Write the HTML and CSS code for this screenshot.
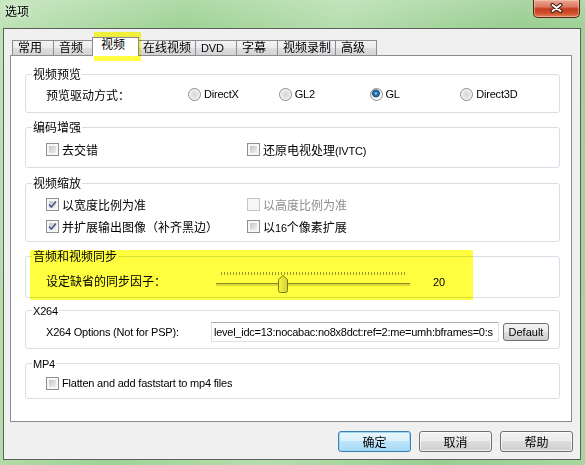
FILE: index.html
```html
<!DOCTYPE html>
<html lang="zh-CN">
<head>
  <meta charset="UTF-8">
  <meta name="viewport" content="width=device-width, initial-scale=1.0">
  <title>选项</title>
  <link rel="stylesheet" href="styles.css">
</head>
<body>
  <div class="window">
    <div class="titlebar">
      <span class="caption">选项</span>
      <button type="button" class="close" aria-label="关闭">
        <svg width="13" height="10" viewBox="0 0 13 10">
          <path d="M2.5 2 L10.5 8 M10.5 2 L2.5 8" stroke="#3b1710" stroke-width="4" stroke-linecap="round" fill="none"/>
          <path d="M2.5 2 L10.5 8 M10.5 2 L2.5 8" stroke="#fff" stroke-width="2" stroke-linecap="round" fill="none"/>
        </svg>
      </button>
    </div>

    <div class="client">
      <div class="tabs">
        <div class="tab">常用</div>
        <div class="tab">音频</div>
        <div class="tab active">视频</div>
        <div class="tab">在线视频</div>
        <div class="tab"><span class="en">DVD</span></div>
        <div class="tab">字幕</div>
        <div class="tab">视频录制</div>
        <div class="tab">高级</div>
      </div>

      <div class="panel">
        <!-- 视频预览 -->
        <div class="group g-preview">
          <div class="group-title">视频预览</div>
          <div class="row">
            <span class="row-label label-driver">预览驱动方式：</span>
            <label class="option"><span class="radio"></span><span class="en">DirectX</span></label>
            <label class="option"><span class="radio"></span><span class="en">GL2</span></label>
            <label class="option"><span class="radio checked"></span><span class="en">GL</span></label>
            <label class="option"><span class="radio"></span><span class="en">Direct3D</span></label>
          </div>
        </div>

        <!-- 编码增强 -->
        <div class="group g-enhance">
          <div class="group-title">编码增强</div>
          <div class="row">
            <label class="option col1"><span class="check"></span><span>去交错</span></label>
            <label class="option"><span class="check"></span><span>还原电视处理<span class="en">(IVTC)</span></span></label>
          </div>
        </div>

        <!-- 视频缩放 -->
        <div class="group g-scale">
          <div class="group-title">视频缩放</div>
          <div class="row">
            <label class="option col1">
              <span class="check"><svg width="11" height="11" viewBox="0 0 11 11"><path d="M2 5.5 L4.3 8 L9 2.5" stroke="#4a5c8c" stroke-width="1.7" fill="none"/></svg></span>
              <span>以宽度比例为准</span>
            </label>
            <label class="option disabled"><span class="check"></span><span>以高度比例为准</span></label>
          </div>
          <div class="row">
            <label class="option col1">
              <span class="check"><svg width="11" height="11" viewBox="0 0 11 11"><path d="M2 5.5 L4.3 8 L9 2.5" stroke="#4a5c8c" stroke-width="1.7" fill="none"/></svg></span>
              <span>并扩展输出图像（补齐黑边）</span>
            </label>
            <label class="option"><span class="check"></span><span>以<span class="en">16</span>个像素扩展</span></label>
          </div>
        </div>

        <!-- 音频和视频同步 -->
        <div class="group g-sync">
          <div class="group-title">音频和视频同步</div>
          <div class="row">
            <span class="row-label label-sync">设定缺省的同步因子：</span>
            <div class="slider">
              <div class="ticks"></div>
              <div class="track"></div>
              <svg class="thumb" width="10" height="18" viewBox="0 0 10 18">
                <defs>
                  <linearGradient id="thumbFill" x1="0" y1="0" x2="1" y2="0">
                    <stop offset="0" stop-color="#f6f6f6"/>
                    <stop offset="1" stop-color="#d0d0d0"/>
                  </linearGradient>
                </defs>
                <path d="M0.5 4.5 L5 0.5 L9.5 4.5 V15.5 Q9.5 17.5 7.5 17.5 H2.5 Q0.5 17.5 0.5 15.5 Z" fill="url(#thumbFill)" stroke="#7a7a7a"/>
              </svg>
            </div>
            <span class="value en">20</span>
          </div>
        </div>

        <!-- X264 -->
        <div class="group g-x264">
          <div class="group-title en">X264</div>
          <div class="row">
            <span class="row-label label-x264 en">X264 Options (Not for PSP):</span>
            <input class="textbox" type="text" value="level_idc=13:nocabac:no8x8dct:ref=2:me=umh:bframes=0:s" readonly>
            <button type="button" class="small-btn">Default</button>
          </div>
        </div>

        <!-- MP4 -->
        <div class="group g-mp4">
          <div class="group-title en">MP4</div>
          <div class="row">
            <label class="option"><span class="check"></span><span class="en">Flatten and add faststart to mp4 files</span></label>
          </div>
        </div>
      </div>

      <div class="actions">
        <button type="button" class="btn default">确定</button>
        <button type="button" class="btn">取消</button>
        <button type="button" class="btn">帮助</button>
      </div>
    </div>
  </div>

  <!-- 黄色标注 -->
  <div class="highlight hl-tab"></div>
  <div class="highlight hl-sync"></div>
</body>
</html>
```

FILE: styles.css
```css
* {
  box-sizing: border-box;
}

body {
  margin: 0;
  width: 585px;
  height: 465px;
  overflow: hidden;
  font-family: "Liberation Sans", "Noto Sans CJK SC", sans-serif;
  font-size: 12px;
  color: #000;
  background:
    linear-gradient(180deg, rgba(255, 255, 255, 0.18), rgba(255, 255, 255, 0) 30px),
    linear-gradient(100deg, #bfe2b7 0%, #9ed294 28%, #b5ddad 52%, #98cd90 78%, #a8d6a0 100%);
}

.en {
  font-size: 11px;
  letter-spacing: -0.2px;
}

/* title bar */

.titlebar {
  height: 28px;
  display: flex;
  align-items: flex-start;
  padding: 0 5px;
}

.caption {
  margin-top: 4px;
  line-height: 16px;
  text-shadow: 0 0 6px rgba(255, 255, 255, 0.9);
}

.close {
  margin-left: auto;
  width: 47px;
  height: 18px;
  padding: 0;
  border: 1px solid #5a2418;
  border-top: none;
  border-radius: 0 0 5px 5px;
  background: linear-gradient(180deg, #e9a894 0%, #dc7a62 40%, #c43d1f 52%, #cf532f 80%, #e6855a 100%);
  box-shadow: inset 0 0 0 1px rgba(255, 220, 200, 0.45);
  display: flex;
  align-items: center;
  justify-content: center;
}

.close svg {
  display: block;
  margin-top: -1px;
}

/* client area */

.client {
  margin-left: 3px;
  width: 578px;
  height: 432px;
  border: 1px solid #5b605b;
  background-color: #f0f0f0;
  padding: 8px 8px 7px 6px;
  display: flex;
  flex-direction: column;
}

.tabs {
  height: 18px;
  display: flex;
  align-items: flex-end;
  padding-left: 2px;
}

.tab {
  height: 15px;
  min-width: 42px;
  margin-right: -1px;
  padding: 0 4px 0 5px;
  border: 1px solid #898c95;
  border-bottom: none;
  line-height: 14px;
  white-space: nowrap;
  background: linear-gradient(180deg, #f3f3f3 0%, #ebebeb 50%, #dedede 51%, #d4d4d4 100%);
}

.tab.active {
  position: relative;
  z-index: 1;
  height: 19px;
  min-width: 47px;
  margin: 0 -2px -1px -2px;
  padding-left: 8px;
  background: #fff;
}

.panel {
  height: 367px;
  background-color: #fff;
  border: 1px solid #898c95;
  padding-top: 18px;
}

/* group boxes */

.group {
  margin: 14px 11px 0 14px;
  padding: 0 8px 8px 20px;
  border: 1px solid #d5dfe5;
  border-radius: 3px;
}

.group-title {
  width: max-content;
  height: 16px;
  margin: -8px 0 0 -14px;
  padding: 0 1px;
  line-height: 16px;
  background-color: #fff;
}

.g-preview {
  margin-top: 0;
}

.g-preview .row { margin-top: 1px; }
.g-enhance .row { margin-top: 3px; }
.g-scale { margin-top: 15px; padding-bottom: 5px; }
.g-scale .row { margin-top: 2px; }
.g-sync .row { margin-top: 5px; }
.g-sync { padding-bottom: 7px; }
.g-x264 { margin-top: 12px; padding-bottom: 6px; }
.g-x264 .row { margin-top: 3px; }
.g-mp4 { padding-bottom: 5px; }
.g-mp4 .row { margin-top: 1px; }

.row {
  height: 20px;
  display: flex;
  align-items: center;
  white-space: nowrap;
}

.row-label {
  flex-shrink: 0;
}

.label-driver { width: 142px; }
.label-sync { width: 170px; }
.label-x264 { width: 165px; }

.option {
  display: flex;
  align-items: center;
  gap: 3px;
  width: 92px;
}

.option.col1 {
  width: 201px;
}

.option.disabled {
  color: #8d8d8d;
}

/* radio and checkbox */

.radio {
  flex-shrink: 0;
  width: 13px;
  height: 13px;
  border-radius: 50%;
  border: 1px solid #8d8d8d;
  background: radial-gradient(circle at 50% 50%, #d8d8d8 0, #e2e2e2 3px, #f4f4f4 5px, #fdfdfd 6px);
}

.radio.checked {
  background: radial-gradient(circle at 45% 40%, #9fd8f8 0, #2f86c8 1.5px, #164a7e 3.5px, #dcdcdc 4.2px, #f4f4f4 5px, #fdfdfd 6px);
}

.check {
  flex-shrink: 0;
  width: 13px;
  height: 13px;
  border: 1px solid #8e8f8f;
  padding: 2px;
  background: linear-gradient(135deg, #c6c6c6, #f0f0f0) content-box, #f7f7f7;
}

.check svg {
  display: block;
  margin: -2px;
}

.disabled .check {
  border-color: #c5c5c5;
  background: #f6f6f6;
}

/* slider */

.slider {
  flex-shrink: 0;
  position: relative;
  width: 194px;
  height: 24px;
  margin-top: 4px;
}

.ticks {
  height: 3px;
  margin: 2px 4px 0 5px;
  background: repeating-linear-gradient(90deg, #9a9a9a 0, #9a9a9a 1px, transparent 1px, transparent 3px);
}

.track {
  height: 3px;
  margin-top: 8px;
  border-top: 1px solid #8c8c8c;
  background-color: #dadada;
}

.thumb {
  position: absolute;
  left: 62px;
  top: 5px;
}

.value {
  margin-left: 23px;
  margin-top: 4px;
}

/* text box and buttons */

.textbox {
  flex-shrink: 0;
  width: 288px;
  height: 20px;
  margin: 0;
  padding: 0 2px;
  border: 1px solid #dbdfe6;
  border-top-color: #abadb3;
  font-family: "Liberation Sans", sans-serif;
  font-size: 11px;
  letter-spacing: -0.25px;
  color: #000;
  background-color: #fff;
  outline: none;
}

.small-btn {
  flex-shrink: 0;
  width: 46px;
  height: 18px;
  margin-left: 4px;
  padding: 0;
  border: 1px solid #707070;
  border-radius: 3px;
  font-family: "Liberation Sans", sans-serif;
  font-size: 11px;
  color: #000;
  background: linear-gradient(180deg, #f2f2f2 0%, #ebebeb 49%, #dddddd 50%, #cfcfcf 100%);
}

.actions {
  display: flex;
  justify-content: flex-end;
  gap: 8px;
  margin: 9px -1px 0 0;
}

.btn {
  width: 73px;
  height: 21px;
  padding: 0;
  border: 1px solid #707070;
  border-radius: 3px;
  font-family: "Liberation Sans", "Noto Sans CJK SC", sans-serif;
  font-size: 12px;
  color: #000;
  background: linear-gradient(180deg, #f2f2f2 0%, #ebebeb 49%, #dddddd 50%, #cfcfcf 100%);
  box-shadow: inset 0 0 0 1px rgba(255, 255, 255, 0.7);
}

.btn.default {
  border-color: #3c7fb1;
  background: linear-gradient(180deg, #eaf6fd 0%, #d9f0fc 49%, #bee6fd 50%, #a7d9f5 100%);
  box-shadow: inset 0 0 0 1px #9ed8f6;
}

/* yellow marker annotations */

.highlight {
  position: absolute;
  background-color: #ffff3f;
  mix-blend-mode: multiply;
  pointer-events: none;
}

.hl-tab {
  left: 94px;
  top: 32px;
  width: 47px;
  height: 29px;
}

.hl-sync {
  left: 30px;
  top: 250px;
  width: 443px;
  height: 50px;
}
```
